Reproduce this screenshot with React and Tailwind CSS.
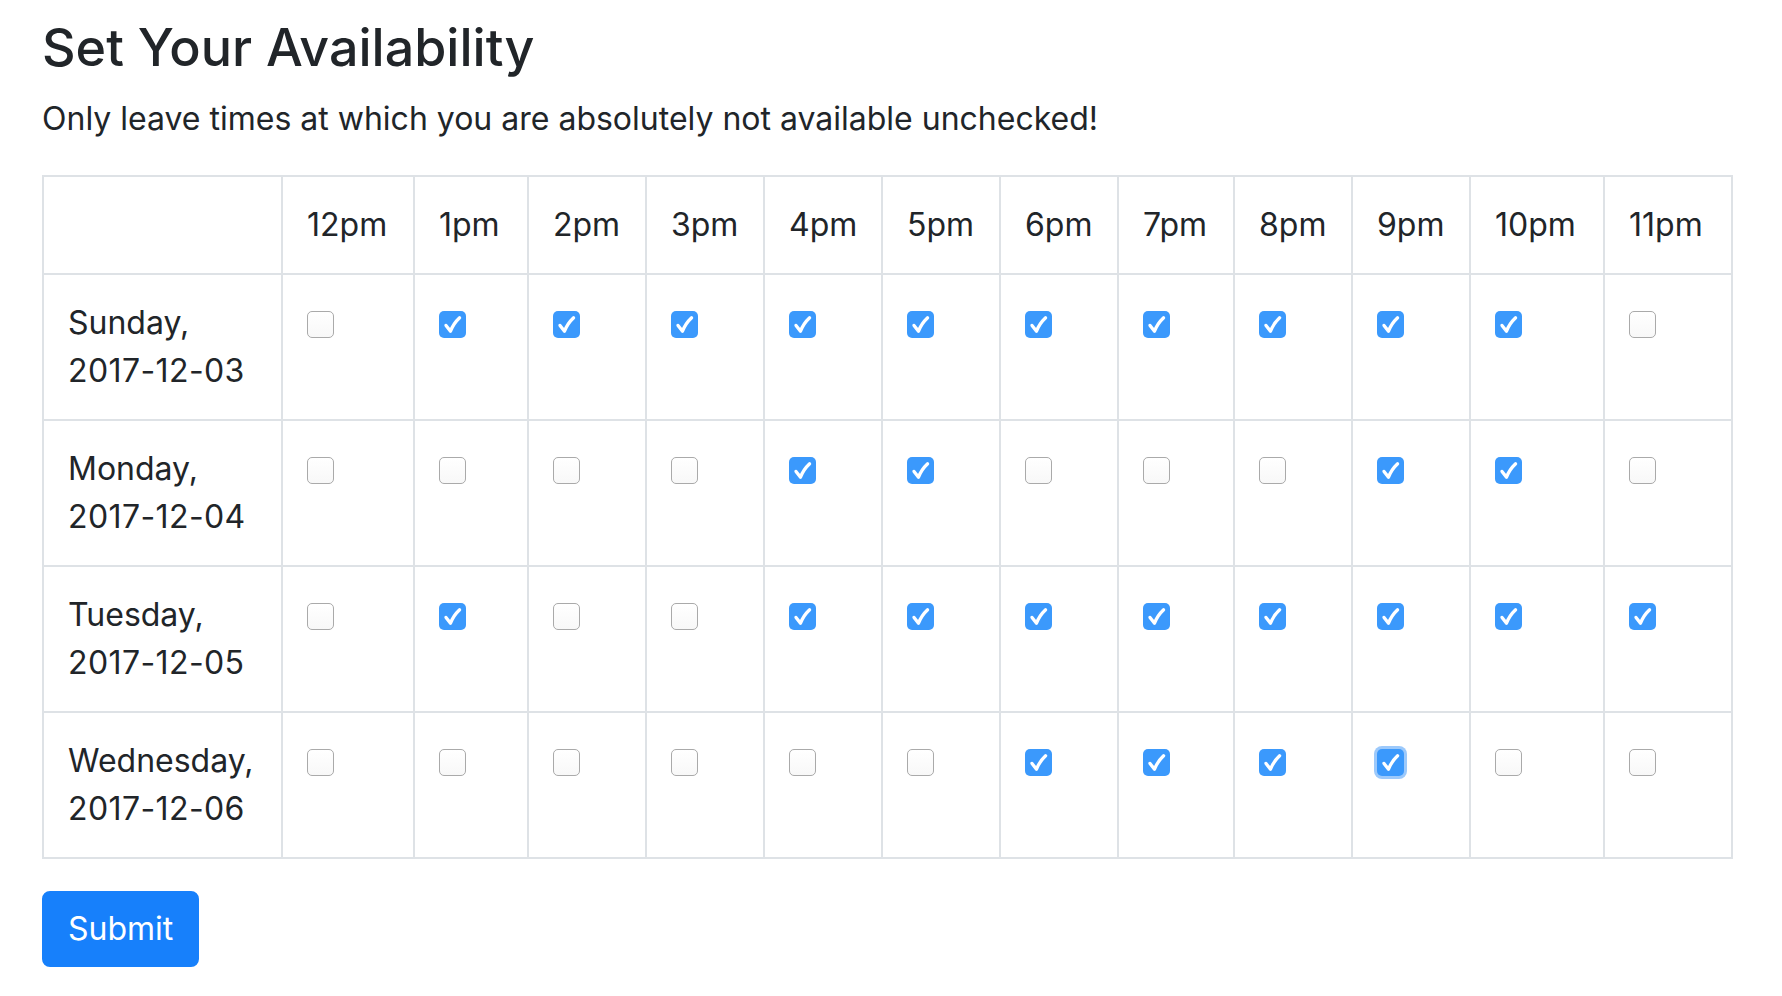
import { useState } from "react";

const HOURS = ["12pm", "1pm", "2pm", "3pm", "4pm", "5pm", "6pm", "7pm", "8pm", "9pm", "10pm", "11pm"];

// border-to-border widths of each column, in px
const COL_WIDTHS = [239, 132, 114, 118, 118, 118, 118, 118, 116, 118, 118, 134, 128];

const DEFAULT_DAYS = [
  { day: "Sunday,", date: "2017-12-03", slots: [0, 1, 1, 1, 1, 1, 1, 1, 1, 1, 1, 0] },
  { day: "Monday,", date: "2017-12-04", slots: [0, 0, 0, 0, 1, 1, 0, 0, 0, 1, 1, 0] },
  { day: "Tuesday,", date: "2017-12-05", slots: [0, 1, 0, 0, 1, 1, 1, 1, 1, 1, 1, 1] },
  { day: "Wednesday,", date: "2017-12-06", slots: [0, 0, 0, 0, 0, 0, 1, 1, 1, 1, 0, 0] },
];

function Checkbox({ checked, focused, onToggle }) {
  return (
    <button
      type="button"
      onClick={onToggle}
      className={
        checked
          ? "mt-[12px] flex h-[27px] w-[27px] items-center justify-center rounded-[5px] bg-[#3b99fc] " +
            (focused ? "shadow-[0_0_0_3px_#9cc9fb]" : "")
          : "mt-[12px] block h-[27px] w-[27px] rounded-[5px] border border-[#aaaaaa] bg-gradient-to-b from-white to-[#f8f8f8]"
      }
    >
      {checked && (
        <svg width="27" height="27" viewBox="0 0 27 27" fill="none">
          <path
            d="M7 14.4 L11.5 20.2 Q14.5 12.5 20.6 6.8"
            stroke="white"
            strokeWidth="3.3"
            strokeLinecap="round"
            strokeLinejoin="round"
          />
        </svg>
      )}
    </button>
  );
}

export default function App() {
  const [days, setDays] = useState(DEFAULT_DAYS);

  const toggle = (d, h) => {
    setDays((prev) =>
      prev.map((row, i) =>
        i !== d ? row : { ...row, slots: row.slots.map((v, j) => (j === h ? (v ? 0 : 1) : v)) }
      )
    );
  };

  return (
    <div className="min-h-screen bg-white pl-[42px] pr-[51px] pt-[17px] font-[Inter,sans-serif] text-[#212529]">
      {/* Header */}
      <h1 className="mb-[16px] text-[52px] font-medium leading-[1.2]">Set Your Availability</h1>
      <p className="mb-[32px] text-[32px] leading-[48px]">
        Only leave times at which you are absolutely not available unchecked!
      </p>

      {/* Availability grid */}
      <table className="mb-[32px] w-[1689px] table-fixed border-collapse border-2 border-[#dee2e6] text-[32px] leading-[48px]">
        <colgroup>
          {COL_WIDTHS.map((w, i) => (
            <col key={i} style={{ width: w }} />
          ))}
        </colgroup>
        <thead>
          <tr>
            <th className="border-2 border-[#dee2e6] p-[24px]"></th>
            {HOURS.map((h) => (
              <th key={h} className="border-2 border-[#dee2e6] p-[24px] text-left align-bottom font-normal">
                {h}
              </th>
            ))}
          </tr>
        </thead>
        <tbody>
          {days.map((row, d) => (
            <tr key={row.date}>
              <td className="border-2 border-[#dee2e6] p-[24px] align-top">
                {row.day}
                <br />
                <span className="tracking-[0.4px]">{row.date}</span>
              </td>
              {row.slots.map((v, h) => (
                <td key={h} className="border-2 border-[#dee2e6] p-[24px] align-top">
                  <Checkbox checked={!!v} focused={d === 3 && h === 9} onToggle={() => toggle(d, h)} />
                </td>
              ))}
            </tr>
          ))}
        </tbody>
      </table>

      <button
        type="button"
        className="rounded-[8px] border-2 border-[#1780fb] bg-[#1780fb] px-[24px] py-[12px] text-[32px] leading-[48px] text-white"
      >
        Submit
      </button>
    </div>
  );
}
